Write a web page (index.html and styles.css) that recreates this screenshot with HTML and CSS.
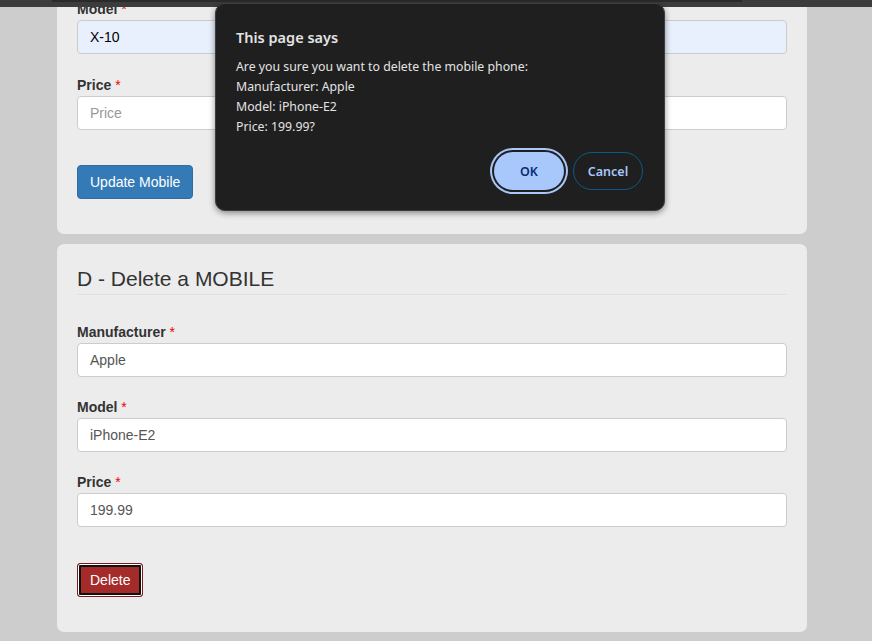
FILE: index.html
```html
<!DOCTYPE html>
<html>
<head>
<meta charset="utf-8">
<link rel="stylesheet" href="styles.css">
</head>
<body>
<div class="topbar"><div class="topbar-dark"></div></div>
<main class="page">
  <section class="card card-cut">
    <div class="cut-inner">
      <div class="group">
        <label class="lbl">Model <span class="req">*</span></label>
        <input class="ctl ctl-auto" type="text" value="X-10">
      </div>
      <div class="group">
        <label class="lbl">Price <span class="req">*</span></label>
        <input class="ctl" type="text" placeholder="Price">
      </div>
      <div class="actions">
        <button class="btn btn-primary">Update Mobile</button>
      </div>
    </div>
  </section>
  <section class="card">
    <h3 class="card-title">D - Delete a MOBILE</h3>
    <div class="group">
      <label class="lbl">Manufacturer <span class="req">*</span></label>
      <input class="ctl" type="text" value="Apple">
    </div>
    <div class="group">
      <label class="lbl">Model <span class="req">*</span></label>
      <input class="ctl" type="text" value="iPhone-E2">
    </div>
    <div class="group">
      <label class="lbl">Price <span class="req">*</span></label>
      <input class="ctl" type="text" value="199.99">
    </div>
    <div class="actions">
      <button class="btn btn-danger">Delete</button>
    </div>
  </section>
</main>
<div class="dialog">
  <div class="dlg-title">This page says</div>
  <div class="dlg-body">
    <div>Are you sure you want to delete the mobile phone:</div>
    <div>Manufacturer: Apple</div>
    <div>Model: iPhone-E2</div>
    <div>Price: 199.99?</div>
  </div>
  <div class="dlg-actions">
    <button class="dbtn dbtn-ok">OK</button>
    <button class="dbtn dbtn-cancel">Cancel</button>
  </div>
</div>
</body>
</html>
```
FILE: styles.css
```css
html, body {
  margin: 0;
  padding: 0;
}
body {
  background: #cdcdcd;
  font-family: "Liberation Sans", Arial, sans-serif;
  font-size: 14px;
  color: #333;
  height: 641px;
  overflow: hidden;
}
.topbar {
  height: 7px;
  background: #3c3c3c;
}
.topbar-dark {
  height: 2px;
  width: 690px;
  margin-left: 52px;
  background: #2a2a2a;
}
.page {
  width: 750px;
  margin-left: 57px;
  display: flex;
  flex-direction: column;
  gap: 10px;
}
.card {
  background: #ececec;
  border-radius: 7px;
  padding: 20px 20px 35px;
}
.card-cut {
  border-radius: 0 0 7px 7px;
  padding-top: 0;
  overflow: hidden;
  height: 227px;
  box-sizing: border-box;
}
.cut-inner {
  margin-top: -8px;
}
.card-title {
  margin: 4px 0 0;
  font-size: 21px;
  font-weight: normal;
  line-height: 22px;
  color: #333;
  padding-bottom: 4px;
  border-bottom: 1px solid #e0e0e0;
  margin-bottom: 27px;
}
.group {
  margin-bottom: 20px;
}
.card-cut .group {
  margin-bottom: 21px;
}
.lbl {
  display: block;
  font-weight: bold;
  line-height: 20px;
  margin-bottom: 1px;
  color: #333;
}
.req {
  color: #e00;
  font-weight: normal;
}
.ctl {
  display: block;
  box-sizing: border-box;
  width: 100%;
  height: 34px;
  padding: 6px 12px;
  font-family: "Liberation Sans", Arial, sans-serif;
  font-size: 14px;
  color: #555;
  background: #fff;
  border: 1px solid #ccc;
  border-radius: 4px;
  outline: none;
}
.ctl::placeholder {
  color: #999;
}
.ctl-auto {
  background: #e8f0fe;
  color: #000;
}
.actions {
  padding-top: 16px;
}
.card-cut .actions {
  padding-top: 14px;
}
.btn {
  box-sizing: border-box;
  height: 34px;
  padding: 6px 12px;
  font-family: "Liberation Sans", Arial, sans-serif;
  font-size: 14px;
  line-height: 20px;
  color: #fff;
  border-radius: 4px;
  cursor: pointer;
}
.btn-primary {
  background: #337ab7;
  border: 1px solid #2e6da4;
}
.btn-danger {
  background: #a52a2a;
  border: 1px solid #7a1c1c;
  box-shadow: inset 0 0 0 1px #fff, inset 0 0 0 3px #111;
  border-radius: 3px;
}
.dialog {
  position: absolute;
  left: 215px;
  top: 3px;
  width: 450px;
  height: 208px;
  box-sizing: border-box;
  background: #1f1f1f;
  border: 1px solid #3d3d3d;
  border-radius: 10px;
  box-shadow: 0 2px 6px rgba(0,0,0,0.45);
  padding: 22px 21px 0 20px;
  font-family: "Noto Sans", "Open Sans", sans-serif;
  color: #e3e3e3;
}
.dlg-title {
  font-size: 14.5px;
  font-weight: 600;
  line-height: 22px;
  margin-bottom: 9px;
}
.dlg-body {
  font-size: 12.3px;
  line-height: 20px;
}
.dlg-actions {
  display: flex;
  justify-content: flex-end;
  gap: 9px;
  margin-top: 15px;
}
.dbtn {
  box-sizing: border-box;
  height: 38px;
  border-radius: 19px;
  font-family: "Noto Sans", "Open Sans", sans-serif;
  font-size: 12.5px;
  font-weight: 600;
  cursor: pointer;
}
.dbtn-ok {
  width: 70px;
  background: #a8c7fa;
  color: #062e6f;
  border: none;
  box-shadow: 0 0 0 2px #1f1f1f, 0 0 0 4px #a8c7fa;
}
.dbtn-cancel {
  width: 70px;
  background: transparent;
  color: #a8c7fa;
  border: 1px solid #0b5a8a;
}
```
